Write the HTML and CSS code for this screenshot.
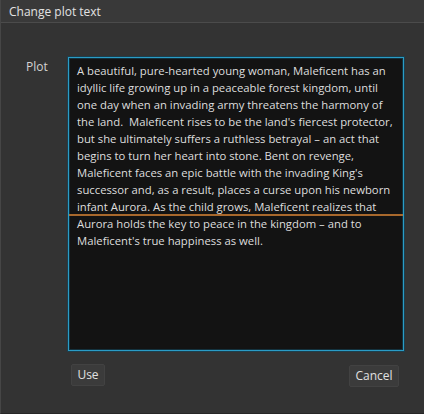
FILE: index.html
```html
<!DOCTYPE html>
<html>
<head>
<meta charset="utf-8">
<link rel="stylesheet" href="styles.css">
</head>
<body>
<div class="window">
  <div class="titlebar">Change plot text</div>
  <div class="content">
    <div class="row">
      <div class="label">Plot</div>
      <div class="field">
        <div class="text">
          <span class="line">A beautiful, pure-hearted young woman, Maleficent has an</span>
          <span class="line">idyllic life growing up in a peaceable forest kingdom, until</span>
          <span class="line">one day when an invading army threatens the harmony of</span>
          <span class="line">the land.&nbsp; Maleficent rises to be the land's fiercest protector,</span>
          <span class="line">but she ultimately suffers a ruthless betrayal – an act that</span>
          <span class="line">begins to turn her heart into stone. Bent on revenge,</span>
          <span class="line">Maleficent faces an epic battle with the invading King's</span>
          <span class="line">successor and, as a result, places a curse upon his newborn</span>
          <span class="line">infant Aurora. As the child grows, Maleficent realizes that</span>
          <div class="marker"></div>
          <span class="line">Aurora holds the key to peace in the kingdom – and to</span>
          <span class="line">Maleficent's true happiness as well.</span>
        </div>
      </div>
    </div>
    <div class="buttons">
      <button class="btn btn-use">Use</button>
      <button class="btn btn-cancel">Cancel</button>
    </div>
  </div>
</div>
</body>
</html>
```
FILE: styles.css
```css
html, body {
  margin: 0;
  padding: 0;
  background: #333333;
}
body {
  width: 424px;
  height: 414px;
  overflow: hidden;
  font-family: "Open Sans", "Noto Sans", sans-serif;
  color: #dcdcdc;
}
.window {
  width: 424px;
  height: 414px;
  box-sizing: border-box;
  border-left: 1px solid #464646;
  border-bottom: 1px solid #262626;
  display: flex;
  flex-direction: column;
  background: #333333;
}
.titlebar {
  height: 23px;
  box-sizing: border-box;
  border-bottom: 1px solid #4b4b4b;
  background: #393939;
  padding-left: 8px;
  font-size: 12px;
  line-height: 23px;
  color: #e2e2e2;
}
.content {
  flex: 1;
  display: flex;
  flex-direction: column;
  padding: 34px 20px 0 0;
}
.row {
  display: flex;
}
.label {
  width: 67px;
  box-sizing: border-box;
  padding-left: 25px;
  padding-top: 1px;
  font-size: 12px;
  line-height: 17px;
  color: #d4d4d4;
}
.field {
  width: 336px;
  height: 294px;
  box-sizing: border-box;
  border: 1px solid #2a9cc6;
  box-shadow: 0 0 0 1px #1d3f4d, inset 0 0 0 1px #14323e;
  background: #131313;
  padding: 4px 8px 0 8px;
}
.text {
  font-size: 11.3px;
  line-height: 17px;
  color: #dedede;
}
.line {
  display: block;
  white-space: nowrap;
}
.marker {
  height: 2px;
  margin: -1px -8px -1px -8px;
  background: #a8682c;
}
.buttons {
  display: flex;
  justify-content: space-between;
  padding: 13px 5px 0 70px;
}
.btn {
  height: 22px;
  box-sizing: border-box;
  background: #3b3b3b;
  border: 1px solid #424242;
  border-radius: 2px;
  color: #e0e0e0;
  font-family: "Open Sans", "Noto Sans", sans-serif;
  font-size: 12px;
  line-height: 18px;
  padding: 0 7px;
}
.btn-use {
  width: 34px;
  padding: 0;
}
.btn-cancel {
  width: 50px;
  padding: 0;
  margin-top: 1px;
}
```
